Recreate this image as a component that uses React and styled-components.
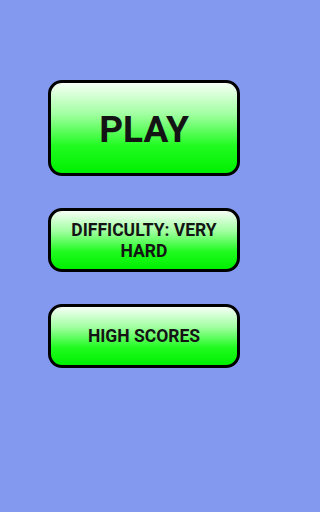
import styled, { createGlobalStyle } from "styled-components";

const GlobalStyle = createGlobalStyle`
  html, body {
    margin: 0;
    padding: 0;
    background: #8399f0;
  }
  body {
    font-family: Roboto, "Liberation Sans", sans-serif;
  }
`;

const Screen = styled.div`
  width: 288px;
  height: 512px;
  box-sizing: border-box;
  padding-top: 80px;
  display: flex;
  flex-direction: column;
  align-items: center;
  gap: 32px;
  background: #8399f0;
`;

const MenuButton = styled.button`
  width: 192px;
  height: ${(p) => (p.$big ? "96px" : "64px")};
  box-sizing: border-box;
  border: 3px solid #000;
  border-radius: 14px;
  background: linear-gradient(to bottom, #f6fff6 0%, #a0ffa0 35%, #20fb20 70%, #00f000 100%);
  color: #141414;
  font-family: Roboto, "Liberation Sans", sans-serif;
  font-weight: bold;
  font-size: ${(p) => (p.$big ? "37px" : "17.5px")};
  line-height: ${(p) => (p.$big ? "40px" : "21px")};
  padding: ${(p) => (p.$big ? "4px 12px 0" : "1px 12px 0")};
  text-align: center;
  cursor: pointer;
`;

export default function App() {
  return (
    <>
      <GlobalStyle />
      <Screen>
        <MenuButton $big>PLAY</MenuButton>
        <MenuButton>DIFFICULTY: VERY HARD</MenuButton>
        <MenuButton>HIGH SCORES</MenuButton>
      </Screen>
    </>
  );
}
